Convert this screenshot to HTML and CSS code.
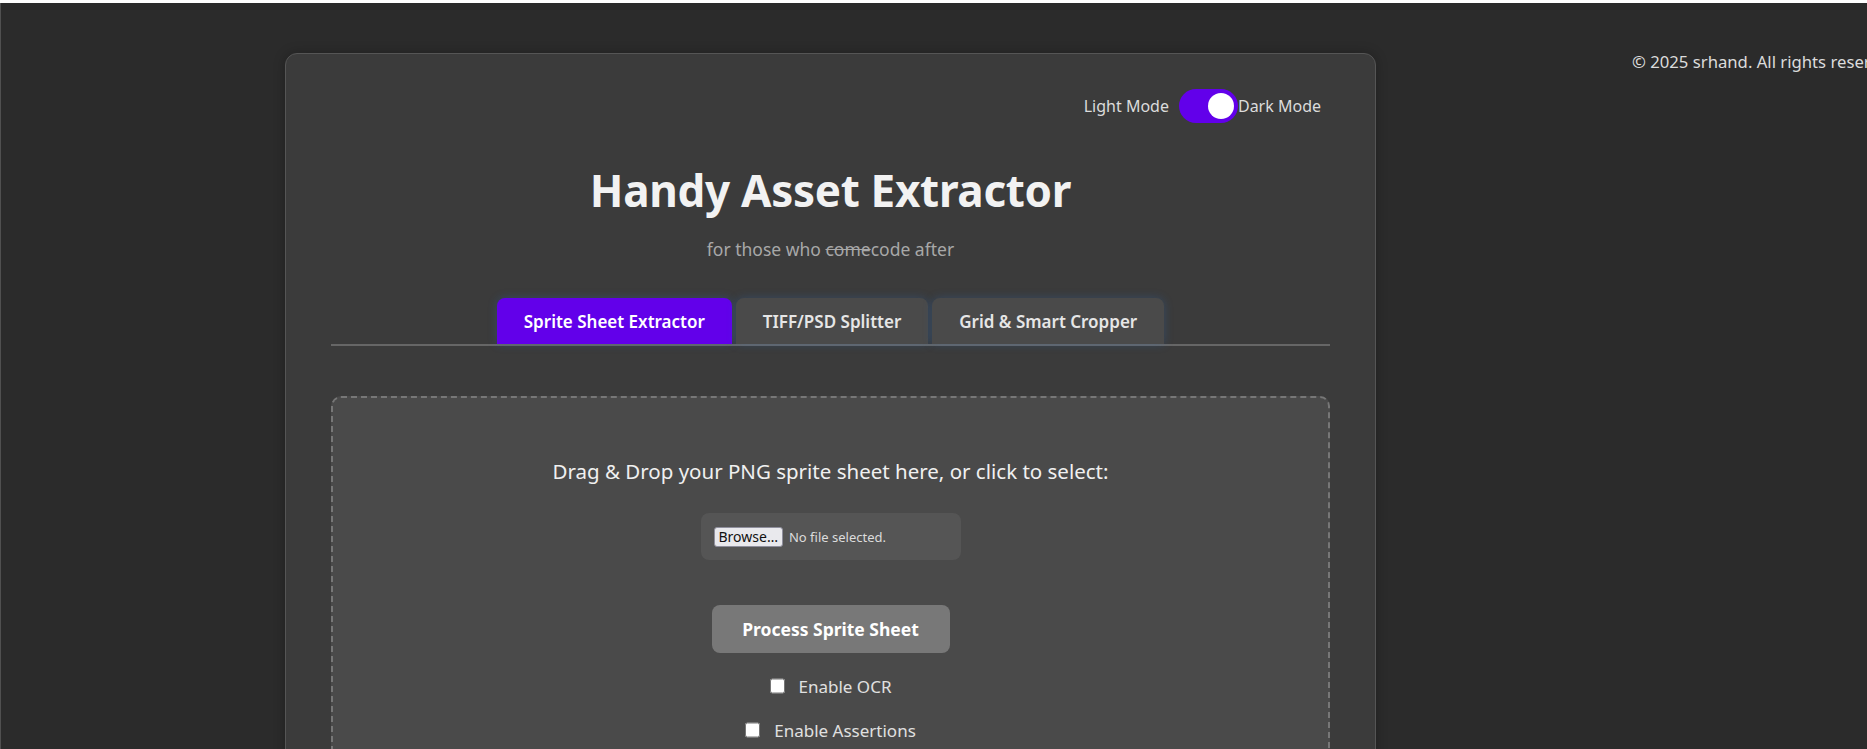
FILE: index.html
```html
<!DOCTYPE html>
<html lang="en">
<head>
<meta charset="utf-8">
<title>Handy Asset Extractor</title>
<link rel="stylesheet" href="styles.css">
</head>
<body>
  <div class="container">
    <div class="theme-row">
      <span class="theme-label">Light Mode</span>
      <span class="switch"><span class="knob"></span></span>
      <span class="theme-label">Dark Mode</span>
    </div>
    <h1 class="title">Handy Asset Extractor</h1>
    <p class="subtitle">for those who <s>come</s>code after</p>
    <div class="tabs">
      <button class="tab active">Sprite Sheet Extractor</button>
      <button class="tab">TIFF/PSD Splitter</button>
      <button class="tab">Grid &amp; Smart Cropper</button>
    </div>
    <div class="dropzone">
      <p class="drop-text">Drag &amp; Drop your PNG sprite sheet here, or click to select:</p>
      <div class="file-box">
        <span class="browse">Browse…</span>
        <span class="file-status">No file selected.</span>
      </div>
      <button class="process">Process Sprite Sheet</button>
      <label class="check-row"><input type="checkbox" class="check"> Enable OCR</label>
      <label class="check-row"><input type="checkbox" class="check"> Enable Assertions</label>
    </div>
  </div>
  <footer class="footer">© 2025 srhand. All rights reserved.</footer>
</body>
</html>
```
FILE: styles.css
```css
html {
  background: #ffffff;
}
body {
  margin: 3px 0 0 0;
  min-height: 746px;
  background: #2b2b2b;
  border-left: 1px solid #505050;
  font-family: "Noto Sans", "Open Sans", sans-serif;
  color: #e0e0e0;
  display: flex;
  align-items: flex-start;
  padding-left: 284px;
  overflow: hidden;
}
.container {
  flex: 0 0 1091px;
  box-sizing: border-box;
  margin-top: 50px;
  padding: 35px 45px 60px;
  background: #3b3b3b;
  border: 1px solid #555;
  border-radius: 12px;
  box-shadow: 0 0 12px rgba(0, 0, 0, 0.25);
  display: flex;
  flex-direction: column;
  align-items: center;
}
.theme-row {
  align-self: flex-end;
  margin-right: 9px;
  display: flex;
  align-items: center;
  height: 34px;
}
.theme-label {
  font-size: 16px;
  color: #dcdcdc;
}
.switch {
  width: 59px;
  height: 34px;
  margin-left: 10px;
  border-radius: 17px;
  background: #6200ea;
  display: flex;
  align-items: center;
  justify-content: flex-end;
  padding-right: 4px;
  box-sizing: border-box;
}
.knob {
  width: 26px;
  height: 26px;
  border-radius: 50%;
  background: #ffffff;
}
.title {
  margin: 39px 0 0;
  font-size: 44px;
  line-height: 56px;
  font-weight: 700;
  color: #f2f2f2;
  letter-spacing: -0.3px;
}
.subtitle {
  margin: 19px 0 0;
  font-size: 17.5px;
  line-height: 24px;
  color: #a8a8a8;
}
.tabs {
  margin-top: 37px;
  align-self: stretch;
  display: flex;
  justify-content: center;
  gap: 4px;
  border-bottom: 2px solid #666;
}
.tab {
  height: 46px;
  padding: 0 27px;
  border: none;
  border-radius: 8px 8px 0 0;
  background: #4a4a4a;
  color: #e6e6e6;
  font-family: "Noto Sans", "Open Sans", sans-serif;
  font-size: 17px;
  font-weight: 600;
  box-shadow: 0 0 10px rgba(40, 110, 200, 0.28);
}
.tab.active {
  background: #6200ea;
  color: #ffffff;
}
.dropzone {
  margin-top: 50px;
  align-self: stretch;
  background: #4a4a4a;
  border: 2px dashed #777;
  border-radius: 10px;
  padding: 59px 20px 40px;
  display: flex;
  flex-direction: column;
  align-items: center;
}
.drop-text {
  margin: 0;
  font-size: 20.5px;
  line-height: 28px;
  color: #f0f0f0;
}
.file-box {
  margin-top: 28px;
  width: 260px;
  height: 47px;
  box-sizing: border-box;
  background: #555;
  border-radius: 8px;
  display: flex;
  align-items: center;
  padding-left: 13px;
  gap: 6px;
}
.browse {
  font-size: 14px;
  line-height: 18px;
  color: #111;
  background: #e9e9ed;
  border: 1px solid #8f8f9d;
  border-radius: 3px;
  padding: 0 4px;
}
.file-status {
  font-size: 13px;
  color: #dcdcdc;
}
.process {
  margin-top: 45px;
  width: 238px;
  height: 48px;
  border: none;
  border-radius: 8px;
  background: #787878;
  color: #ffffff;
  font-family: "Noto Sans", "Open Sans", sans-serif;
  font-size: 17.5px;
  font-weight: 700;
}
.check-row {
  margin-top: 22px;
  height: 22px;
  display: flex;
  align-items: center;
  gap: 14px;
  font-size: 17px;
  color: #e0e0e0;
}
.check {
  width: 15px;
  height: 16px;
  margin: 0;
}
.footer {
  margin-top: 48px;
  margin-left: 256px;
  white-space: nowrap;
  font-size: 16.7px;
  line-height: 22px;
  color: #dcdcdc;
}
```
